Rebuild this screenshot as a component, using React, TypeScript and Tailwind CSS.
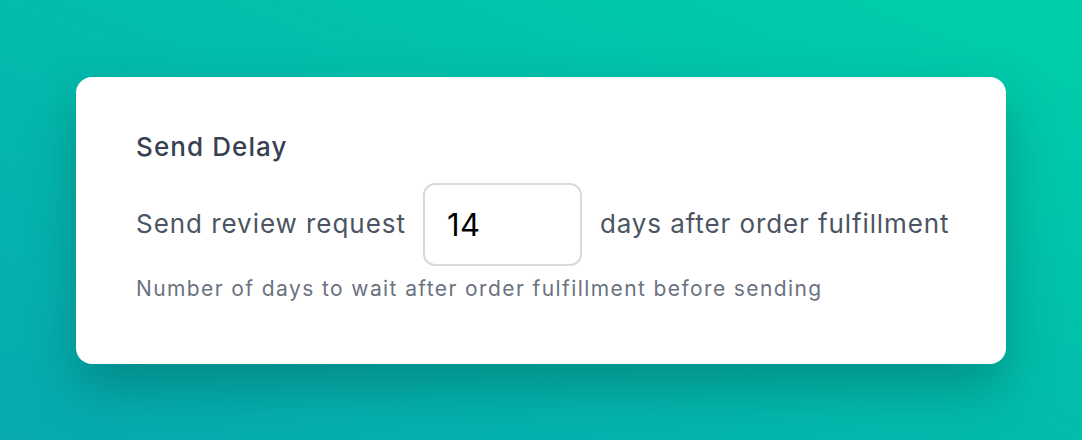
import React, { useState } from 'react';

const SendDelayCard: React.FC = () => {
  const [days, setDays] = useState('14');

  return (
    <div className="w-[930px] h-[287px] bg-white rounded-[16px] shadow-[0_24px_50px_rgba(0,70,70,0.35)] pt-[54px] px-[60px]">
      <h2 className="text-[26px] leading-[32px] font-medium tracking-[1.1px] text-[#374151]">Send Delay</h2>

      <div className="flex items-center gap-[17px] mt-[20px]">
        <span className="shrink-0 whitespace-nowrap text-[26px] leading-[32px] tracking-[0.95px] text-[#4b5563]">
          Send review request
        </span>
        <input
          type="text"
          value={days}
          onChange={(e) => setDays(e.target.value)}
          className="shrink-0 w-[159px] h-[83px] border-2 border-[#d9dadc] rounded-[12px] px-[22px] text-[31px] tracking-[0.5px] text-black bg-white outline-none"
        />
        <span className="shrink-0 whitespace-nowrap ml-[1px] text-[26px] leading-[32px] tracking-[0.9px] text-[#4b5563]">
          days after order fulfillment
        </span>
      </div>

      <p className="mt-[9px] text-[21px] leading-[28px] tracking-[1.4px] text-[#6b7280]">
        Number of days to wait after order fulfillment before sending
      </p>
    </div>
  );
};

export default function App() {
  return (
    <div
      className="w-[1082px] h-[440px] flex items-center justify-center bg-linear-to-tr from-[#07a9ae] to-[#00cfaa]"
      style={{ fontFamily: 'Inter, "Noto Sans", sans-serif' }}
    >
      <SendDelayCard />
    </div>
  );
}
